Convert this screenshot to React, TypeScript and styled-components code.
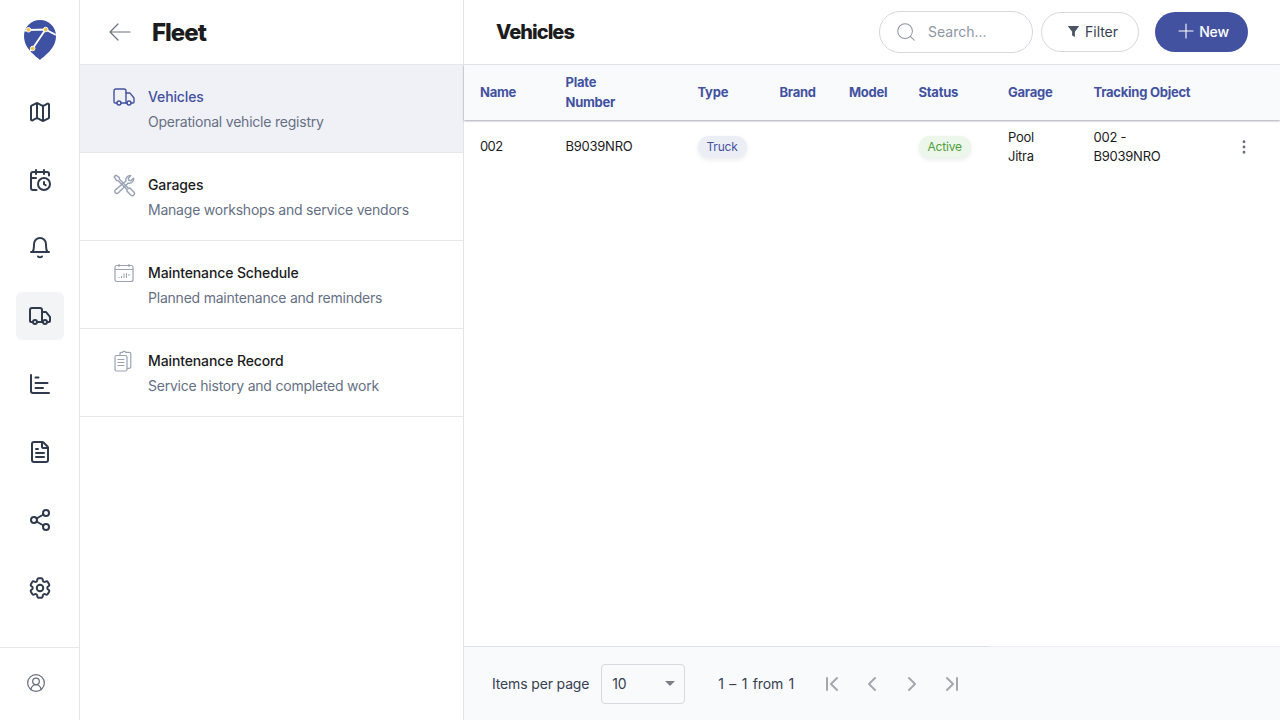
import React from "react";
import styled, { createGlobalStyle } from "styled-components";
import {
  CalendarClock, ChevronLeft, ChevronRight, ChevronFirst, ChevronLast,
  CircleUserRound, EllipsisVertical, FileText, Map as MapIcon, Plus, Search,
  Share2, Truck,
} from "lucide-react";
import { HiOutlineCog6Tooth } from "react-icons/hi2";

const Global = createGlobalStyle`
  html, body { margin: 0; padding: 0; height: 100%; background: #fff; }
  body { font-family: Inter, "Liberation Sans", sans-serif; color: #1c1c1e; -webkit-font-smoothing: antialiased; }
  * { box-sizing: border-box; }
  #root { height: 720px; }
`;

const Shell = styled.div`
  display: flex;
  width: 1280px;
  height: 720px;
  overflow: hidden;
`;

const Rail = styled.aside`
  width: 80px;
  flex: none;
  display: flex;
  flex-direction: column;
  border-right: 1px solid #e5e7eb;
  padding-top: 16px;
`;

const LogoBox = styled.div`
  width: 48px;
  height: 48px;
  margin: 0 0 24px 16px;
  display: flex;
  align-items: center;
  justify-content: center;
`;

const RailNav = styled.nav`
  display: flex;
  flex-direction: column;
  gap: 20px;
  padding-left: 16px;
  flex: 1;
`;

const RailButton = styled.div<{ $active?: boolean }>`
  width: 48px;
  height: 48px;
  border-radius: 6px;
  display: flex;
  align-items: center;
  justify-content: center;
  color: #2f3a4c;
  background: ${(p) => (p.$active ? "#f3f4f6" : "transparent")};
`;

const RailFooter = styled.div`
  height: 73px;
  border-top: 1px solid #e5e7eb;
  display: flex;
  align-items: center;
  padding: 0 0 2px 26px;
  color: #656d7d;
`;

const Panel = styled.section`
  width: 384px;
  flex: none;
  display: flex;
  flex-direction: column;
  border-right: 1px solid #e2e4e8;
`;

const PanelHeader = styled.header`
  height: 65px;
  flex: none;
  display: flex;
  align-items: center;
  padding-left: 28px;
  gap: 20px;
  color: #6b7280;
  border-bottom: 1px solid #e5e7eb;
`;

const PanelTitle = styled.h1`
  margin: 0;
  font-size: 24px;
  font-weight: 800;
  letter-spacing: -1px;
  color: #1c1c1e;
`;

const MenuItem = styled.div<{ $active?: boolean }>`
  height: 88px;
  flex: none;
  display: flex;
  gap: 12px;
  padding: 20px 0 0 32px;
  border-bottom: 1px solid #e5e7eb;
  background: ${(p) => (p.$active ? "#f0f1f6" : "#fff")};
`;

const MenuIcon = styled.div<{ $active?: boolean }>`
  width: 24px;
  height: 24px;
  flex: none;
  color: ${(p) => (p.$active ? "#4352a0" : "#9aa3b5")};
  display: flex;
  align-items: center;
  justify-content: center;
`;

const MenuText = styled.div`
  display: flex;
  flex-direction: column;
  gap: 8px;
  padding-top: 3px;
`;

const MenuTitle = styled.div<{ $active?: boolean }>`
  font-size: 14px;
  line-height: 17px;
  font-weight: 500;
  letter-spacing: -0.12px;
  color: ${(p) => (p.$active ? "#4352a0" : "#1c1c1e")};
`;

const MenuSub = styled.div`
  font-size: 14px;
  line-height: 17px;
  letter-spacing: -0.22px;
  color: #667085;
`;

const Main = styled.main`
  flex: 1;
  min-width: 0;
  display: flex;
  flex-direction: column;
`;

const Toolbar = styled.header`
  height: 65px;
  flex: none;
  display: flex;
  align-items: center;
  padding: 0 32px;
  border-bottom: 1px solid #e5e7eb;
`;

const MainTitle = styled.h2`
  margin: 0;
  flex: 1;
  font-size: 20px;
  font-weight: 800;
  letter-spacing: -0.95px;
  color: #1c1c1e;
`;

const SearchBox = styled.div`
  width: 154px;
  height: 42px;
  border: 1px solid #d5d8dd;
  border-radius: 21px;
  display: flex;
  align-items: center;
  gap: 11px;
  padding: 0 0 1px 15px;
  color: #8d96a5;
  font-size: 14px;
  margin-right: 8px;
`;

const FilterButton = styled.div`
  width: 98px;
  height: 40px;
  border: 1px solid #d5d8dd;
  border-radius: 20px;
  display: flex;
  align-items: center;
  justify-content: center;
  gap: 5px;
  padding: 0 0 2px 5px;
  font-size: 14px;
  letter-spacing: -0.05px;
  color: #374151;
  margin-right: 16px;
`;

const NewButton = styled.div`
  width: 93px;
  height: 40px;
  border-radius: 20px;
  background: #4352a0;
  color: #fff;
  display: flex;
  align-items: center;
  justify-content: center;
  gap: 1px;
  padding-bottom: 2px;
  font-size: 14px;
  font-weight: 500;
  letter-spacing: -0.2px;
`;

const columns = "85.5px 132px 82px 69.5px 69.5px 89.5px 85.5px 170px";

const HeadRow = styled.div`
  height: 55px;
  flex: none;
  display: grid;
  grid-template-columns: ${columns};
  align-items: center;
  padding: 0 0 2px 16px;
  background: #f8fafc;
  box-shadow: 0 1px 2px rgba(60, 64, 80, 0.45);
  position: relative;
  font-size: 13px;
  line-height: 20px;
  font-weight: 700;
  letter-spacing: -0.25px;
  color: #4352a0;
`;

const BodyRow = styled.div`
  height: 52px;
  margin-top: 1px;
  flex: none;
  display: grid;
  grid-template-columns: ${columns};
  align-items: center;
  padding-left: 16px;
  font-size: 13px;
  line-height: 19px;
  letter-spacing: -0.25px;
  color: #1c1c1e;
`;

const SingleLineCell = styled.div<{ $tight?: boolean }>`
  padding-bottom: 2px;
  letter-spacing: ${(p) => (p.$tight ? "-0.6px" : "-0.25px")};
`;

const Chip = styled.span<{ $tone: "blue" | "green" }>`
  display: inline-block;
  height: 22px;
  line-height: 22px;
  padding: 0 9px;
  border-radius: 11px;
  font-size: 12px;
  letter-spacing: -0.2px;
  background: ${(p) => (p.$tone === "blue" ? "#eceef6" : "#ecf6ea")};
  color: ${(p) => (p.$tone === "blue" ? "#4352a0" : "#4f9e3a")};
  box-shadow: 0 2px 4px rgba(60, 64, 80, 0.1);
`;

const TrackingCell = styled.div`
  display: flex;
  justify-content: space-between;
  align-items: center;
`;

const RowAction = styled.div`
  display: flex;
  padding-right: 11px;
  color: #667085;
`;

const TableSpace = styled.div`
  flex: 1;
`;

const Footer = styled.footer`
  height: 74px;
  flex: none;
  display: flex;
  align-items: center;
  padding-left: 28px;
  background: #f8fafc;
  border-top: 1px solid #eceef2;
  position: relative;
  font-size: 14px;
  letter-spacing: -0.15px;
  color: #374151;
  &::before {
    content: "";
    position: absolute;
    left: 0;
    top: -1px;
    width: 525px;
    height: 1px;
    background: #dfe2e8;
  }
`;

const PageSelect = styled.div`
  width: 84px;
  height: 40px;
  margin-left: 12px;
  border: 1px solid #d5d9e0;
  border-radius: 4px;
  display: flex;
  align-items: center;
  justify-content: space-between;
  padding: 0 9px 0 10px;
`;

const Caret = styled.span`
  width: 0;
  height: 0;
  border-left: 5px solid transparent;
  border-right: 5px solid transparent;
  border-top: 5px solid #7b7f87;
`;

const RangeLabel = styled.span`
  margin-left: 33px;
  word-spacing: 1.7px;
`;

const Pager = styled.div`
  display: flex;
  gap: 16px;
  margin-left: 26px;
  color: #a4a7ad;
`;

function Logo() {
  const pin = "M17 41 C13 37 1 30 1 17 C1 8 8 1 17 1 C26 1 33 8 33 17 C33 30 21 37 17 41Z";
  return (
    <svg width="34" height="42" viewBox="0 0 34 42" aria-hidden>
      <defs>
        <clipPath id="pinClip"><path d={pin} /></clipPath>
      </defs>
      <path d={pin} fill="#3f51a3" />
      <g clipPath="url(#pinClip)" stroke="#fff" strokeWidth="1.9" fill="none">
        <path d="M0 12 L5.500 11 L22.500 10.500 L10 29 L2 37" />
        <path d="M22.500 10.500 L33 16" />
      </g>
      <g fill="#f0c64a" stroke="#fff" strokeWidth="0.9">
        <circle cx="5.500" cy="10.800" r="2.300" />
        <circle cx="22.700" cy="10.500" r="2.300" />
        <circle cx="9.700" cy="29.500" r="2.300" />
      </g>
    </svg>
  );
}

function BellIcon() {
  return (
    <svg width="24" height="24" viewBox="0 0 24 24" fill="none" stroke="currentColor" strokeWidth="2" strokeLinecap="round" strokeLinejoin="round">
      <path d="M3 16h18" />
      <path d="M4.500 16C6 14 6 12 6 9.500V8a6 6 0 0 1 12 0v1.500c0 2.500 0 4.500 1.500 6.500" />
      <path d="M10 20.500c1.200 1 2.800 1 4 0" />
    </svg>
  );
}

function ChartIcon() {
  return (
    <svg width="24" height="24" viewBox="0 0 24 24" fill="none" stroke="currentColor" strokeWidth="2" strokeLinecap="round">
      <path d="M3 3v16a2 2 0 0 0 2 2h16" />
      <path d="M7.500 5.500h3M7.500 11h12M7.500 16h7.500" />
    </svg>
  );
}

function RecordIcon() {
  return (
    <svg width="20" height="22" viewBox="0 0 20 22" fill="none" stroke="currentColor" strokeWidth="1.2">
      <rect x="1" y="5.500" width="12" height="15.500" rx="1.500" />
      <path d="M6 5.500V3.500a1.200 1.200 0 0 1 1.200-1.200h1.300a1.800 1.800 0 0 1 3.200 0h3.600a1.500 1.500 0 0 1 1.500 1.500v13a1.500 1.500 0 0 1-1.500 1.500H13" />
      <path d="M3.500 9.500h7M3.500 12.500h7M3.500 15.500h7" />
    </svg>
  );
}

function ScheduleIcon() {
  return (
    <svg width="20" height="20" viewBox="0 0 20 20" fill="none" stroke="currentColor" strokeWidth="1.2">
      <rect x="1" y="2.500" width="18" height="16" rx="2" />
      <path d="M1 6.500h18M5 1v3M15 1v3" />
      <path d="M5 14v1M7.500 13v2M10 10.500v4.500M12.500 10v5M15 11v2" strokeWidth="1" />
    </svg>
  );
}

function ToolsIcon() {
  return (
    <svg width="24" height="24" viewBox="0 0 22 22" fill="none" stroke="currentColor" strokeWidth="1.3" strokeLinejoin="round">
      <path d="M2 3.500 3.500 2l3.300 2.200v1.600l8.400 8.400 1.200-.4 3.800 3.800a2 2 0 0 1-2.800 2.800l-3.800-3.800.4-1.200L5.600 7H4.200Z" />
      <path d="M12.800 7.400c-.7-2.400 1-5 3.800-5.200l.6.2-2.300 2.400.5 1.900 1.900.5 2.400-2.300.2.600c-.2 2.800-2.800 4.500-5.200 3.800l-8.900 8.900a1.900 1.900 0 0 1-2.700-2.700Z" />
    </svg>
  );
}

function BackArrow() {
  return (
    <svg width="24" height="24" viewBox="0 0 24 24" fill="none" stroke="currentColor" strokeWidth="1.200" strokeLinecap="round" strokeLinejoin="round">
      <path d="M2 12h20M10 4l-8 8 8 8" />
    </svg>
  );
}

function FunnelIcon() {
  return (
    <svg width="13" height="13" viewBox="0 0 13 13" fill="#4b5563">
      <path d="M.8 1h11.400L7.900 6.800V12L5.100 10.500V6.800Z" />
    </svg>
  );
}

const railItems = [
  <MapIcon size={24} strokeWidth={2} />,
  <CalendarClock size={24} strokeWidth={2} />,
  <BellIcon />,
  <Truck size={24} strokeWidth={2} />,
  <ChartIcon />,
  <FileText size={24} strokeWidth={2} />,
  <Share2 size={24} strokeWidth={2} />,
  <HiOutlineCog6Tooth size={26} style={{ strokeWidth: 1.8 }} />,
];

const menu = [
  { title: "Vehicles", sub: "Operational vehicle registry", icon: <Truck size={24} strokeWidth={1.4} />, active: true },
  { title: "Garages", sub: "Manage workshops and service vendors", icon: <ToolsIcon /> },
  { title: "Maintenance Schedule", sub: "Planned maintenance and reminders", icon: <ScheduleIcon /> },
  { title: "Maintenance Record", sub: "Service history and completed work", icon: <RecordIcon /> },
];

export default function App() {
  return (
    <Shell>
      <Global />
      <Rail>
        <LogoBox><Logo /></LogoBox>
        <RailNav>
          {railItems.map((icon, i) => (
            <RailButton key={i} $active={i === 3}>{icon}</RailButton>
          ))}
        </RailNav>
        <RailFooter><CircleUserRound size={20} strokeWidth={1.5} /></RailFooter>
      </Rail>
      <Panel>
        <PanelHeader>
          <BackArrow />
          <PanelTitle>Fleet</PanelTitle>
        </PanelHeader>
        {menu.map((m) => (
          <MenuItem key={m.title} $active={m.active}>
            <MenuIcon $active={m.active}>{m.icon}</MenuIcon>
            <MenuText>
              <MenuTitle $active={m.active}>{m.title}</MenuTitle>
              <MenuSub>{m.sub}</MenuSub>
            </MenuText>
          </MenuItem>
        ))}
      </Panel>
      <Main>
        <Toolbar>
          <MainTitle>Vehicles</MainTitle>
          <SearchBox><Search size={22} strokeWidth={1.100} />Search...</SearchBox>
          <FilterButton><FunnelIcon />Filter</FilterButton>
          <NewButton><Plus size={24} strokeWidth={1.100} />New</NewButton>
        </Toolbar>
        <HeadRow>
          <div>Name</div>
          <div>Plate<br />Number</div>
          <div>Type</div>
          <div>Brand</div>
          <div>Model</div>
          <div>Status</div>
          <div>Garage</div>
          <div>Tracking Object</div>
        </HeadRow>
        <BodyRow>
          <SingleLineCell $tight>002</SingleLineCell>
          <SingleLineCell>B9039NRO</SingleLineCell>
          <div><Chip $tone="blue">Truck</Chip></div>
          <div />
          <div />
          <div><Chip $tone="green">Active</Chip></div>
          <div>Pool<br />Jitra</div>
          <TrackingCell>
            <span>002 -<br />B9039NRO</span>
            <RowAction><EllipsisVertical size={18} strokeWidth={1.800} /></RowAction>
          </TrackingCell>
        </BodyRow>
        <TableSpace />
        <Footer>
          Items per page
          <PageSelect>10<Caret /></PageSelect>
          <RangeLabel>1 – 1 from 1</RangeLabel>
          <Pager>
            <ChevronFirst size={24} strokeWidth={2} />
            <ChevronLeft size={24} strokeWidth={2} />
            <ChevronRight size={24} strokeWidth={2} />
            <ChevronLast size={24} strokeWidth={2} />
          </Pager>
        </Footer>
      </Main>
    </Shell>
  );
}
